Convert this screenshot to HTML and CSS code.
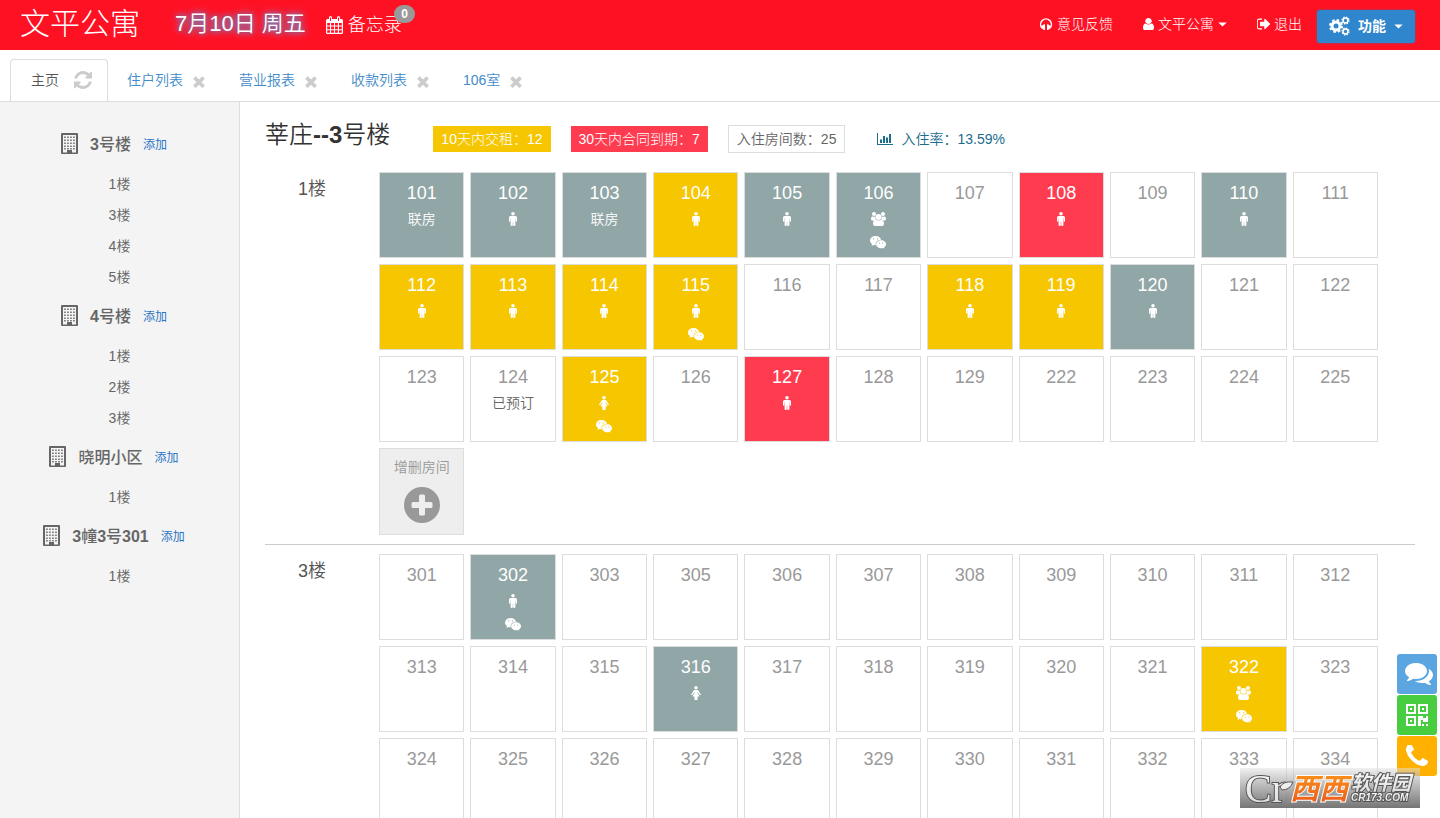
FILE: index.html
```html
<!DOCTYPE html>
<html lang="zh-CN">
<head>
<meta charset="utf-8">
<meta name="viewport" content="width=device-width, initial-scale=1">
<title>文平公寓</title>
<link rel="stylesheet" href="styles.css">
</head>
<body>
<svg class="sprite" aria-hidden="true">
  <symbol id="i-close" viewBox="300 300 1190 1290"><path d="M1490 1322q0 40-28 68l-136 136q-28 28-68 28t-68-28l-294-294-294 294q-28 28-68 28t-68-28l-136-136q-28-28-28-68t28-68l294-294-294-294q-28-28-28-68t28-68l136-136q28-28 68-28t68 28l294 294 294-294q28-28 68-28t68 28l136 136q28 28 28 68t-28 68l-294 294 294 294q28 28 28 68z"/></symbol>
  <symbol id="i-refresh" viewBox="128 128 1536 1536"><path d="M1639 1056q0 5-1 7-64 268-268 434.500t-478 166.500q-146 0-282.500-55t-243.500-157l-129 129q-19 19-45 19t-45-19-19-45v-448q0-26 19-45t45-19h448q26 0 45 19t19 45-19 45l-137 137q71 66 161 102t187 36q134 0 250-65t186-179q11-17 53-117 8-23 30-23h192q13 0 22.500 9.500t9.500 22.500zm25-800v448q0 26-19 45t-45 19h-448q-26 0-45-19t-19-45 19-45l138-138q-148-137-349-137-134 0-250 65t-186 179q-11 17-53 117-8 23-30 23h-199q-13 0-22.500-9.500t-9.500-22.500v-7q65-268 270-434.500t480-166.500q146 0 284 55.500t245 156.500l130-129q19-19 45-19t45 19 19 45z"/></symbol>
  <symbol id="i-phone" viewBox="192 256 1408 1280"><path d="M1600 1240q0 27-10 70.500t-21 68.500q-21 50-122 106-94 51-186 51-27 0-53-3.500t-57.500-12.500-47-14.500-55.500-20.500-49-18q-98-35-175-83-127-79-264-216t-216-264q-48-77-83-175-3-9-18-49t-20.500-55.500-14.500-47-12.500-57.500-3.500-53q0-92 51-186 56-101 106-122 25-11 68.500-21t70.500-10q14 0 21 3 18 6 53 76 11 19 30 54t35 63.500 31 53.500q3 4 17.500 25t21.500 35.500 7 28.500q0 20-28.500 50t-62 55-62 53-28.500 46q0 9 5 22.500t8.500 20.500 14 24 11.500 19q76 137 174 235t235 174q2 1 19 11.500t24 14 20.500 8.500 22.500 5q18 0 46-28.500t53-62 55-62 50-28.500q14 0 28.500 7t35.500 21.500 25 17.500q25 15 53.500 31t63.500 35 54 30q70 35 76 53 3 7 3 21z"/></symbol>
  <symbol id="i-comments" viewBox="0 256 1792 1408"><path d="M1408 768q0 139-94 257t-256.500 186.500-353.500 68.500q-86 0-176-16-124 88-278 128-36 9-86 16h-3q-11 0-20.500-8t-11.500-21q-1-3-1-6.500t.5-6.500 2-6l2.500-5 3.500-5.500 4-5 4.500-5 4-4.500q5-6 23-25t26-29.500 22.500-29 25-38.500 20.500-44q-124-72-195-177t-71-224q0-139 94-257t256.500-186.500 353.500-68.500 353.500 68.500 256.500 186.500 94 257zm384 256q0 120-71 224.500t-195 176.500q10 24 20.500 44t25 38.500 22.500 29 26 29.500 23 25q1 1 4 4.500t4.500 5 4 5 3.500 5.500l2.500 5 2 6 .5 6.500-1 6.500q-3 14-13 22t-22 7q-50-7-86-16-154-40-278-128-90 16-176 16-271 0-472-132 58 4 88 4 161 0 309-45t264-129q125-92 192-212t67-254q0-77-23-152 129 71 204 178t75 230z"/></symbol>
  <symbol id="i-signout" viewBox="96 192 1536 1408"><path d="M704 1440q0 4 1 20t.5 26.500-3 23.500-10 19.500-20.500 6.500h-320q-119 0-203.500-84.500t-84.500-203.500v-704q0-119 84.500-203.500t203.500-84.500h320q13 0 22.500 9.500t9.500 22.500q0 4 1 20t.5 26.500-3 23.500-10 19.500-20.500 6.500h-320q-66 0-113 47t-47 113v704q0 66 47 113t113 47h312l11.500 1 11.500 3 8 5.500 7 9 2 13.500zm928-544q0 26-19 45l-544 544q-19 19-45 19t-45-19-19-45v-288h-448q-26 0-45-19t-19-45v-384q0-26 19-45t45-19h448v-288q0-26 19-45t45-19 45 19l544 544q19 19 19 45z"/></symbol>
  <symbol id="i-user" viewBox="256 128 1280 1536" preserveAspectRatio="none"><path d="M1536 1399q0 109-62.500 187t-150.500 78h-854q-88 0-150.500-78t-62.500-187q0-85 8.500-160.500t31.500-152 58.500-131 94-89 134.500-34.500q131 128 313 128t313-128q76 0 134.500 34.500t94 89 58.500 131 31.500 152 8.500 160.500zm-256-887q0 159-112.500 271.500t-271.500 112.500-271.500-112.500-112.500-271.500 112.500-271.500 271.500-112.500 271.500 112.500 112.500 271.500z"/></symbol>
  <symbol id="i-headphones" viewBox="0 0 14 12"><path d="M2.600 9.500A5.400 5.400 0 1 1 11.400 9.500" fill="none" stroke="currentColor" stroke-width="1.500"/><path d="M2 9q0-1.200 1.200-1.500L5 6.200h1V12H5L3.200 10.800Q2 10.400 2 9zM12 9q0-1.200-1.200-1.500L9 6.200H8V12h1l1.800-1.200Q12 10.400 12 9z"/></symbol>
  <symbol id="i-calendar" viewBox="0 0 17 18"><path fill-rule="evenodd" d="M1.500 3H3V1.500Q3 0 4.500 0T6 1.500V3h5V1.500Q11 0 12.500 0T14 1.500V3h1.500Q17 3 17 4.500v12q0 1.500-1.500 1.500h-14Q0 18 0 16.500v-12Q0 3 1.500 3zM4 1.500V5h1V1.500zm8 0V5h1V1.500zM1.200 7v2.500H4V7zm3.900 0v2.500h2.900V7zm3.900 0v2.500h2.900V7zm4 0v2.500h2.800V7zM1.200 10.500v2.700H4v-2.700zm3.900 0v2.700h2.900v-2.700zm3.900 0v2.700h2.900v-2.700zm4 0v2.700h2.800v-2.700zM1.200 14.200v2.600H4v-2.600zm3.900 0v2.600h2.900v-2.600zm3.900 0v2.600h2.900v-2.600zm4 0v2.600h2.800v-2.600z"/></symbol>
  <symbol id="i-caret" viewBox="0 0 10 6"><path d="M0 0.500h10L5 5.500z"/></symbol>
  <symbol id="i-cogs" viewBox="0 0 21 20"><g fill="none" stroke="currentColor"><circle cx="7" cy="10" r="4" stroke-width="3"/><circle cx="7" cy="10" r="6" stroke-width="2" stroke-dasharray="2.500 2.212"/><circle cx="16.500" cy="4.500" r="2.400" stroke-width="1.500"/><circle cx="16.500" cy="4.500" r="3.500" stroke-width="1.200" stroke-dasharray="1.500 1.249"/><circle cx="16.500" cy="15.500" r="2.400" stroke-width="1.500"/><circle cx="16.500" cy="15.500" r="3.500" stroke-width="1.200" stroke-dasharray="1.500 1.249"/></g></symbol>
  <symbol id="i-building" viewBox="0 0 17 21"><path fill-rule="evenodd" d="M1 0h15q1 0 1 1v19q0 1-1 1H1q-1 0-1-1V1q0-1 1-1zM2 2v17.500h4V17h5v2.500h4V2z"/><path fill="none" stroke="currentColor" stroke-width="1.500" stroke-dasharray="1.500 1.500" d="M3.200 4.200h10.600M3.200 7.200h10.600M3.200 10.200h10.600M3.200 13.200h10.600M3.200 15.800h10.600"/></symbol>
  <symbol id="i-chart" viewBox="0 0 16 12"><path d="M0 0h1v11h15v1H0zM3 6.500h2V10H3zM6 3h2v7H6zM9 4.500h2V10H9zM12 1h2v9h-2z"/></symbol>
  <symbol id="i-male" viewBox="0 0 8 14"><circle cx="4" cy="1.800" r="1.800"/><path d="M1.500 4h5Q8 4 8 5.500V9q0 .7-.6.700T6.700 9V6.300h-.3v7q0 .7-1.100.7t-1.100-.7V9.700h-.4v3.600q0 .7-1.100.7t-1.100-.7v-7h-.3V9q0 .7-.7.700T0 9V5.500Q0 4 1.500 4z"/></symbol>
  <symbol id="i-female" viewBox="0 0 10 14"><circle cx="5" cy="1.800" r="1.800"/><path d="M3.600 4h2.800q.7 0 1.100.7l2.300 3.500q.3.500-.2.900t-.9-.1L6.900 6.300h-.3v.8L8.500 10.500H6.600v2.900q0 .6-.8.600H4.200q-.8 0-.8-.6v-2.900H1.500L3.400 7.100v-.8h-.3L1.300 9q-.4.500-.9.100t-.2-.9L2.500 4.700Q2.900 4 3.600 4z"/></symbol>
  <symbol id="i-group" viewBox="0 0 15 14"><circle cx="3" cy="2" r="2"/><circle cx="12" cy="2" r="2"/><circle cx="7.500" cy="5" r="3"/><path d="M1.200 4.200q1.800 1 3.200 0Q3.800 6 4.800 7.500 3.800 8 3.300 8.500H1.500Q0 8.500 0 7q0-2.300 1.200-2.800zM13.800 4.200q-1.800 1-3.200 0 .6 1.800-.4 3.300 1 .5 1.500 1h1.800Q15 8.500 15 7q0-2.300-1.200-2.800zM4.500 7.500q3 2 6 0Q13 8 13 12q0 2-2 2H4q-2 0-2-2 0-4 2.500-4.500z"/></symbol>
  <symbol id="i-wechat" viewBox="0 0 17 14"><path fill-rule="evenodd" d="M6 .5C2.700.5 0 2.700 0 5.500c0 1.500.8 2.900 2.200 3.800L1.600 11.200l2.200-1.100q1 .3 2.100.3Q5.500 4.800 11.800 4.500C11.200 2.200 8.900.5 6 .5zM3.900 2.900a.7.700 0 1 1 0 1.400.7.700 0 0 1 0-1.400zm4.200 0a.7.700 0 1 1 0 1.400.7.700 0 0 1 0-1.400z"/><path fill-rule="evenodd" d="M11.800 5.100c-2.900 0-5.300 1.900-5.300 4.300s2.400 4.300 5.300 4.300q.9 0 1.700-.3l1.700.6-.3-1.200c1.300-.8 2.100-2 2.100-3.400 0-2.400-2.300-4.300-5.200-4.300zM10.100 7.500a.6.600 0 1 1 0 1.200.6.600 0 0 1 0-1.200zm3.400 0a.6.600 0 1 1 0 1.200.6.600 0 0 1 0-1.200z"/></symbol>
  <symbol id="i-plus" viewBox="0 0 36 36"><path fill-rule="evenodd" d="M18 0a18 18 0 1 1 0 36 18 18 0 0 1 0-36zM16.500 7.500Q15 7.500 15 9v6H9q-1.500 0-1.500 1.500v3Q7.500 21 9 21h6v6q0 1.500 1.500 1.500h3Q21 28.500 21 27v-6h6q1.500 0 1.500-1.500v-3Q28.500 15 27 15h-6V9q0-1.500-1.500-1.500z"/></symbol>
  <symbol id="i-qrcode" viewBox="0 0 22 22"><path fill-rule="evenodd" d="M0 0h10v10H0zM2 2v6h6V2zM4 4h2v2H4zM12 0h10v10H12zM14 2v6h6V2zM16 4h2v2h-2zM0 12h10v10H0zM2 14v6h6v-6zM4 16h2v2H4zM12 12h5v2h3v-2h2v6h-5v-2h-2v6h-3zM16 20h2v2h-2zM20 20h2v2h-2z"/></symbol>
</svg>

<header class="topbar">
  <h1 class="brand">文平公寓</h1>
  <time class="date">7月10日 周五</time>
  <a class="memo" href="#"><svg class="memo-icon"><use href="#i-calendar"/></svg>备忘录<span class="count">0</span></a>
  <nav class="topnav">
    <a href="#"><svg class="icon-14"><use href="#i-headphones"/></svg>意见反馈</a>
    <a href="#"><svg class="icon-11"><use href="#i-user"/></svg>文平公寓<svg class="caret"><use href="#i-caret"/></svg></a>
    <a href="#"><svg class="icon-13"><use href="#i-signout"/></svg>退出</a>
  </nav>
  <button class="func" type="button"><svg class="cogs"><use href="#i-cogs"/></svg>功能<svg class="caret"><use href="#i-caret"/></svg></button>
</header>

<nav class="tabs">
  <div class="tab tab-active"><a href="#">主页</a><button type="button" aria-label="刷新"><svg class="refresh"><use href="#i-refresh"/></svg></button></div>
  <div class="tab"><a href="#">住户列表</a><button type="button" aria-label="关闭"><svg class="close"><use href="#i-close"/></svg></button></div>
  <div class="tab"><a href="#">营业报表</a><button type="button" aria-label="关闭"><svg class="close"><use href="#i-close"/></svg></button></div>
  <div class="tab"><a href="#">收款列表</a><button type="button" aria-label="关闭"><svg class="close"><use href="#i-close"/></svg></button></div>
  <div class="tab"><a href="#">106室</a><button type="button" aria-label="关闭"><svg class="close"><use href="#i-close"/></svg></button></div>
</nav>

<div class="body">
  <aside class="sidebar">
    <section>
      <h2><svg class="building"><use href="#i-building"/></svg><span><b>3</b>号楼</span><a href="#">添加</a></h2>
      <ul><li><a href="#">1楼</a></li><li><a href="#">3楼</a></li><li><a href="#">4楼</a></li><li><a href="#">5楼</a></li></ul>
    </section>
    <section>
      <h2><svg class="building"><use href="#i-building"/></svg><span><b>4</b>号楼</span><a href="#">添加</a></h2>
      <ul><li><a href="#">1楼</a></li><li><a href="#">2楼</a></li><li><a href="#">3楼</a></li></ul>
    </section>
    <section>
      <h2><svg class="building"><use href="#i-building"/></svg><span>晓明小区</span><a href="#">添加</a></h2>
      <ul><li><a href="#">1楼</a></li></ul>
    </section>
    <section>
      <h2><svg class="building"><use href="#i-building"/></svg><span><b>3</b>幢<b>3</b>号<b>301</b></span><a href="#">添加</a></h2>
      <ul><li><a href="#">1楼</a></li></ul>
    </section>
  </aside>

  <main class="content">
    <div class="summary">
      <h2>莘庄<b>--3</b>号楼</h2>
      <div class="stats">
        <a class="stat stat-rent" href="#">10天内交租：12</a>
        <a class="stat stat-expire" href="#">30天内合同到期：7</a>
        <span class="stat stat-count">入住房间数：25</span>
        <a class="rate" href="#"><svg class="chart"><use href="#i-chart"/></svg>入住率：13.59%</a>
      </div>
    </div>

    <section class="floor">
      <h3>1楼</h3>
      <div class="rooms">
        <a class="room let" href="#">101<small>联房</small></a>
        <a class="room let" href="#">102<svg class="male"><use href="#i-male"/></svg></a>
        <a class="room let" href="#">103<small>联房</small></a>
        <a class="room due" href="#">104<svg class="male"><use href="#i-male"/></svg></a>
        <a class="room let" href="#">105<svg class="male"><use href="#i-male"/></svg></a>
        <a class="room let" href="#">106<svg class="group"><use href="#i-group"/></svg><svg class="wechat"><use href="#i-wechat"/></svg></a>
        <a class="room" href="#">107</a>
        <a class="room expiring" href="#">108<svg class="male"><use href="#i-male"/></svg></a>
        <a class="room" href="#">109</a>
        <a class="room let" href="#">110<svg class="male"><use href="#i-male"/></svg></a>
        <a class="room" href="#">111</a>
        <a class="room due" href="#">112<svg class="male"><use href="#i-male"/></svg></a>
        <a class="room due" href="#">113<svg class="male"><use href="#i-male"/></svg></a>
        <a class="room due" href="#">114<svg class="male"><use href="#i-male"/></svg></a>
        <a class="room due" href="#">115<svg class="male"><use href="#i-male"/></svg><svg class="wechat"><use href="#i-wechat"/></svg></a>
        <a class="room" href="#">116</a>
        <a class="room" href="#">117</a>
        <a class="room due" href="#">118<svg class="male"><use href="#i-male"/></svg></a>
        <a class="room due" href="#">119<svg class="male"><use href="#i-male"/></svg></a>
        <a class="room let" href="#">120<svg class="male"><use href="#i-male"/></svg></a>
        <a class="room" href="#">121</a>
        <a class="room" href="#">122</a>
        <a class="room" href="#">123</a>
        <a class="room" href="#">124<small>已预订</small></a>
        <a class="room due" href="#">125<svg class="female"><use href="#i-female"/></svg><svg class="wechat"><use href="#i-wechat"/></svg></a>
        <a class="room" href="#">126</a>
        <a class="room expiring" href="#">127<svg class="male"><use href="#i-male"/></svg></a>
        <a class="room" href="#">128</a>
        <a class="room" href="#">129</a>
        <a class="room" href="#">222</a>
        <a class="room" href="#">223</a>
        <a class="room" href="#">224</a>
        <a class="room" href="#">225</a>
        <button class="room add" type="button">增删房间<svg class="plus"><use href="#i-plus"/></svg></button>
      </div>
    </section>

    <section class="floor">
      <h3>3楼</h3>
      <div class="rooms">
        <a class="room" href="#">301</a>
        <a class="room let" href="#">302<svg class="male"><use href="#i-male"/></svg><svg class="wechat"><use href="#i-wechat"/></svg></a>
        <a class="room" href="#">303</a>
        <a class="room" href="#">305</a>
        <a class="room" href="#">306</a>
        <a class="room" href="#">307</a>
        <a class="room" href="#">308</a>
        <a class="room" href="#">309</a>
        <a class="room" href="#">310</a>
        <a class="room" href="#">311</a>
        <a class="room" href="#">312</a>
        <a class="room" href="#">313</a>
        <a class="room" href="#">314</a>
        <a class="room" href="#">315</a>
        <a class="room let" href="#">316<svg class="female"><use href="#i-female"/></svg></a>
        <a class="room" href="#">317</a>
        <a class="room" href="#">318</a>
        <a class="room" href="#">319</a>
        <a class="room" href="#">320</a>
        <a class="room" href="#">321</a>
        <a class="room due" href="#">322<svg class="group"><use href="#i-group"/></svg><svg class="wechat"><use href="#i-wechat"/></svg></a>
        <a class="room" href="#">323</a>
        <a class="room" href="#">324</a>
        <a class="room" href="#">325</a>
        <a class="room" href="#">326</a>
        <a class="room" href="#">327</a>
        <a class="room" href="#">328</a>
        <a class="room" href="#">329</a>
        <a class="room" href="#">330</a>
        <a class="room" href="#">331</a>
        <a class="room" href="#">332</a>
        <a class="room" href="#">333</a>
        <a class="room" href="#">334</a>
      </div>
    </section>
  </main>
</div>

<div class="floating">
  <button class="float-chat" type="button" aria-label="在线咨询"><svg class="comments"><use href="#i-comments"/></svg></button>
  <button class="float-code" type="button" aria-label="二维码"><svg class="qrcode"><use href="#i-qrcode"/></svg></button>
  <button class="float-call" type="button" aria-label="电话"><svg class="phone"><use href="#i-phone"/></svg></button>
</div>

<div class="watermark">
  <svg viewBox="0 0 180 40">
    <defs>
      <linearGradient id="silver" x1="0" y1="0" x2="0" y2="1"><stop offset="0" stop-color="#fff"/><stop offset="1" stop-color="#d8d8d8"/></linearGradient>
      <linearGradient id="orange" x1="0" y1="0" x2="0" y2="1"><stop offset="0" stop-color="#ffa21a"/><stop offset="1" stop-color="#e8541c"/></linearGradient>
    </defs>
    <text class="wm-serif" x="5" y="34" font-size="40" fill="url(#silver)">Cr</text>
    <path d="M40 19q3-6 13-5-3 8-11 8z" fill="#eee" stroke="#555"/>
    <text class="wm-cjk wm-light" x="50" y="31" font-size="29" fill="url(#orange)">西西</text>
    <text class="wm-cjk" x="111" y="22" font-size="20" fill="url(#silver)">软件园</text>
    <text class="wm-sans" x="111" y="33" font-size="10" fill="url(#silver)">CR173.COM</text>
  </svg>
</div>
</body>
</html>
```
FILE: styles.css
```css
* { box-sizing: border-box; }

body {
  margin: 0;
  height: 100vh;
  display: flex;
  flex-direction: column;
  overflow: hidden;
  background: #fff;
  color: #666;
  font: 350 14px/20px "Liberation Sans", "Noto Sans CJK SC", sans-serif;
}

a { color: inherit; text-decoration: none; }
button { font: inherit; color: inherit; border: 0; padding: 0; background: none; cursor: pointer; }
h1, h2, h3, ul { margin: 0; padding: 0; font-weight: inherit; list-style: none; }
svg { fill: currentColor; flex: none; display: block; }
.sprite { position: absolute; width: 0; height: 0; }

/* Top bar */
.topbar {
  flex: none;
  display: flex;
  align-items: center;
  height: 50px;
  padding: 0 25px 0 20px;
  background: #ff1124;
  color: #fff;
}
.brand { font-size: 30px; line-height: 46px; margin-right: 35px; padding-bottom: 2px; font-weight: 300; }
.date {
  font-size: 22px;
  line-height: 46px;
  padding-bottom: 2px;
  margin-right: 20px;
  text-shadow: 0 0 5px #4a90e2, 0 0 8px #7aa7e0;
}
.memo { position: relative; display: flex; align-items: center; gap: 5px; font-size: 18px; font-weight: 300; }
.memo-icon { width: 17px; height: 18px; }
.count {
  position: absolute;
  right: -13px;
  top: -10px;
  padding: 0 7px;
  border-radius: 10px;
  background: #999;
  font-size: 12px;
  font-weight: 700;
  line-height: 18px;
}
.topnav { display: flex; gap: 30px; margin-left: auto; margin-right: 15px; padding-bottom: 2px; font-weight: 300; }
.topnav a { display: flex; align-items: center; gap: 4px; }
.icon-14 { width: 14px; height: 12px; }
.icon-13 { width: 13px; height: 12px; }
.icon-11 { width: 11px; height: 12px; }
.caret { width: 9px; height: 5px; }
.func {
  display: flex;
  align-items: center;
  gap: 8px;
  height: 33px;
  margin-top: 2px;
  padding: 0 12px;
  border-radius: 3px;
  background: #2f86cc;
  box-shadow: 0 0 2px #2f6fb0;
  font-weight: 700;
}
.cogs { width: 21px; height: 20px; }

/* Tabs */
.tabs {
  flex: none;
  display: flex;
  align-items: flex-end;
  gap: 2px;
  height: 52px;
  padding: 0 10px;
  border-bottom: 1px solid #ddd;
}
.tab {
  display: flex;
  align-items: center;
  gap: 10px;
  height: 42px;
  padding: 0 14px 2px 16px;
  border: 1px solid transparent;
  border-bottom: 0;
  color: #428bca;
}
.tab-active {
  gap: 14px;
  padding: 0 14px 2px 20px;
  border-color: #ddd;
  border-radius: 4px 4px 0 0;
  color: #555;
}
.tab button { color: #ccc; }
.refresh { width: 20px; height: 18px; }
.close { width: 12px; height: 12px; margin-top: 4px; }

/* Page body */
.body { flex: 1; min-height: 0; display: flex; }

.sidebar {
  flex: none;
  width: 240px;
  padding-top: 19px;
  background: #f4f4f4;
  border-right: 1px solid #ddd;
  text-align: center;
}
.sidebar h2 {
  display: flex;
  align-items: center;
  justify-content: center;
  gap: 12px;
  height: 48px;
  padding-right: 11px;
  font-size: 16px;
  font-weight: 500;
}
.sidebar h2 a { color: #2a74c5; font-size: 12px; font-weight: 400; }
.sidebar li { line-height: 31px; }
.building { width: 17px; height: 21px; margin-bottom: 4px; }

.content { flex: 1; min-width: 0; padding: 0 25px; overflow: hidden; }
.summary { display: flex; align-items: center; gap: 43px; height: 70px; }
.summary h2 { padding-bottom: 4px; font-size: 24px; line-height: 30px; color: #333; }
.summary b { font-weight: 700; }
.stats { display: flex; align-items: center; gap: 20px; padding-top: 4px; }
.stat { padding: 3px 8px; color: #fff; }
.stat-rent, .stat-expire { font-weight: 300; }
.stat-rent { background: #f6c600; }
.stat-expire { background: #ff3b50; }
.stat-count { border: 1px solid #ddd; color: #666; }
.rate { display: flex; align-items: center; gap: 8px; margin-left: 12px; color: #1b6d8c; }
.chart { width: 16px; height: 12px; }

.floor { display: grid; grid-template-columns: 94px 1fr; column-gap: 20px; padding: 0 37px 10px 0; }
.floor h3 { font-size: 18px; line-height: 34px; text-align: center; color: #555; }
.floor + .floor { position: relative; padding-top: 10px; }
.floor + .floor::before { content: ""; position: absolute; left: 0; right: 0; top: 0; border-top: 1px solid #ccc; }

.rooms { display: grid; grid-template-columns: repeat(11, 1fr); grid-auto-rows: 86px; gap: 6px; }
.room {
  display: flex;
  flex-direction: column;
  align-items: center;
  padding-top: 10px;
  border: 1px solid #ddd;
  color: #999;
  font-size: 18px;
  font-weight: 400;
}
.room small { margin-top: 6px; font-size: 14px; font-weight: 350; color: #666; }
.let, .due, .expiring, .let small { color: #fff; }
.let { background: #91a6a6; }
.due { background: #f6c600; }
.expiring { background: #ff3b50; }
.male, .female, .group { height: 14px; margin-top: 9px; }
.male { width: 8px; }
.female { width: 10px; }
.group { width: 15px; }
.wechat { width: 16px; height: 14px; margin-top: 9px; }
.add { height: 87px; background: #eee; padding-top: 8px; font-size: 14px; font-weight: 350; }
.plus { width: 36px; height: 36px; margin-top: 10px; }

/* Floating shortcuts */
.floating { position: fixed; right: 3px; bottom: 42px; display: grid; gap: 1px; }
.floating button { display: grid; place-items: center; width: 40px; height: 40px; border-radius: 3px; color: #fff; }
.float-chat { background: #5ba5e1; }
.float-code { background: #48cc40; }
.float-call { background: #ffb000; }
.comments { width: 28px; height: 22px; margin-left: 4px; }
.qrcode { width: 22px; height: 22px; }
.phone { width: 22px; height: 22px; }

.watermark {
  position: fixed;
  right: 20px;
  bottom: 10px;
  width: 180px;
  height: 40px;
  background: linear-gradient(rgba(225, 225, 225, 0.5), rgba(110, 110, 110, 0.95));
}
.watermark svg { overflow: visible; }
.watermark text { stroke: #555; stroke-width: 2px; paint-order: stroke; font-weight: 700; }
.watermark .wm-light { stroke: #fff; }
.watermark .wm-serif { font-family: "Liberation Serif", serif; font-weight: 400; }
.wm-cjk { font-family: "Noto Sans CJK SC", sans-serif; font-style: italic; }
.wm-sans { font-family: "Liberation Sans", sans-serif; font-style: italic; }
```
